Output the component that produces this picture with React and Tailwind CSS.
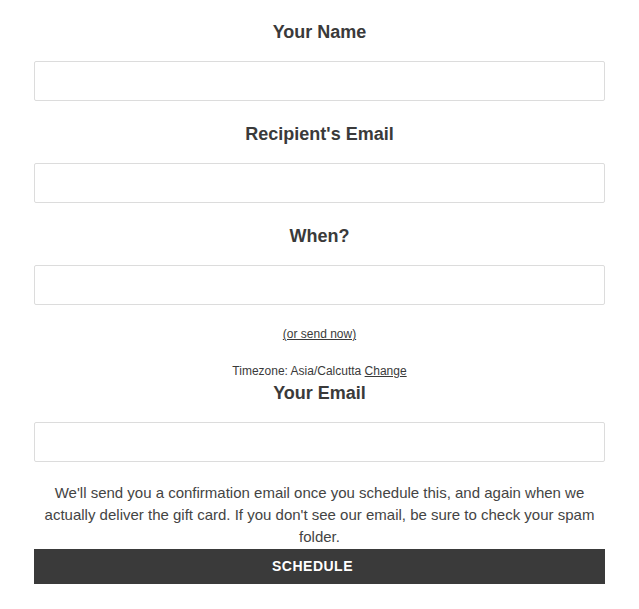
export default function App() {
  const Heading = ({ children, className = "" }) => (
    <h2 className={`text-center text-[18px] leading-[22px] font-bold text-[#3a3a3a] ${className}`}>{children}</h2>
  );
  const Input = ({ className = "" }) => (
    <input className={`block w-full h-[40px] border border-[#dcdcdc] rounded-[2px] bg-white px-3 outline-none ${className}`} />
  );
  return (
    <div className="w-[639px] min-h-[609px] bg-white px-[34px] pt-[21px] text-[#3a3a3a]" style={{ fontFamily: '"Liberation Sans", Arial, sans-serif' }}>
      <Heading>Your Name</Heading>
      <Input className="mt-[18px]" />
      <Heading className="mt-[22px]">Recipient's Email</Heading>
      <Input className="mt-[18px]" />
      <Heading className="mt-[22px]">When?</Heading>
      <Input className="mt-[18px]" />
      <div className="mt-[22px] text-center text-[12px] leading-[14px]">
        <a href="#" className="underline text-[#3a3a3a]">(or send now)</a>
      </div>
      <div className="mt-[23px] text-center text-[12px] leading-[14px]">
        Timezone: Asia/Calcutta <a href="#" className="underline">Change</a>
      </div>
      <Heading className="mt-[4px]">Your Email</Heading>
      <Input className="mt-[18px]" />
      <p className="mt-[20px] text-center text-[15px] leading-[22px] text-[#444444]">
        We'll send you a confirmation email once you schedule this, and again when we actually deliver the gift card. If you don't see our email, be sure to check your spam folder.
      </p>
      <button className="mt-[1px] block w-full h-[35px] bg-[#3a3a3a] pr-[14px] text-white text-[14px] font-bold tracking-[0.5px]">
        SCHEDULE
      </button>
    </div>
  );
}
